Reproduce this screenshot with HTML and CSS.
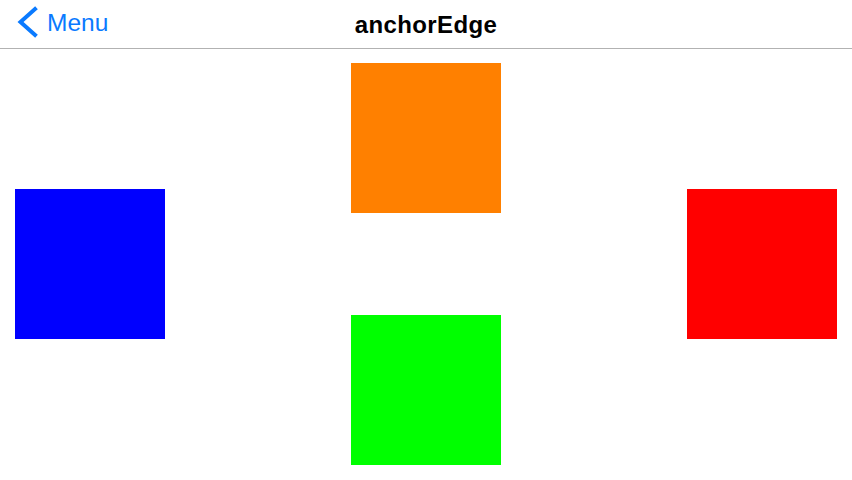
FILE: index.html
```html
<!DOCTYPE html>
<html>
<head>
<meta charset="utf-8">
<link rel="stylesheet" href="styles.css">
</head>
<body>
<header class="navbar">
  <a class="back">
    <svg class="chev" width="22" height="32" viewBox="0 0 22 32"><polyline points="19,3 4.5,16 19,29" fill="none" stroke="#0a7aff" stroke-width="4" stroke-linecap="square"/></svg>
    <span class="back-label">Menu</span>
  </a>
  <h1 class="title">anchorEdge</h1>
</header>
<main class="stage">
  <div class="box blue"></div>
  <div class="middle">
    <div class="box orange"></div>
    <div class="box green"></div>
  </div>
  <div class="box red"></div>
</main>
</body>
</html>
```
FILE: styles.css
```css
html, body {
  margin: 0;
  padding: 0;
  background: #ffffff;
  width: 852px;
  height: 480px;
  overflow: hidden;
  font-family: "Liberation Sans", Arial, sans-serif;
}
.navbar {
  position: relative;
  height: 48px;
  border-bottom: 1px solid #b2b2b2;
  display: flex;
  align-items: center;
  justify-content: center;
}
.back {
  position: absolute;
  left: 16px;
  top: 5px;
  display: flex;
  align-items: center;
  color: #0a7aff;
}
.chev {
  display: block;
}
.back-label {
  font-size: 24.5px;
  margin-left: 9px;
  line-height: 32px;
  margin-top: 2px;
}
.title {
  margin: 0;
  font-size: 24px;
  font-weight: bold;
  letter-spacing: 0.4px;
  color: #000;
  line-height: 30px;
  margin-top: 2px;
}
.stage {
  height: 431px;
  box-sizing: border-box;
  padding: 14px 15px 15px 15px;
  display: flex;
  justify-content: space-between;
  align-items: center;
}
.middle {
  height: 100%;
  display: flex;
  flex-direction: column;
  justify-content: space-between;
}
.box {
  width: 150px;
  height: 150px;
}
.blue { background: #0000ff; }
.orange { background: #ff8000; }
.green { background: #00ff00; }
.red { background: #ff0000; }
```
